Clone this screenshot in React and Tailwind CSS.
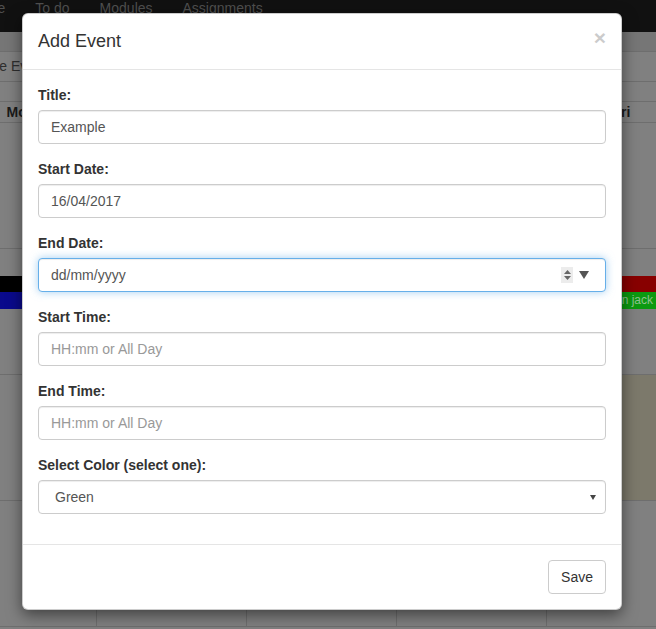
import { useState } from "react";

const inputCls =
  "block w-full h-[34px] px-[12px] py-[6px] text-[14px] leading-[20px] text-[#555] bg-white border border-[#ccc] rounded-[4px] shadow-[inset_0_1px_1px_rgba(0,0,0,0.075)] outline-none placeholder:text-[#999]";

function Field({ label, children }) {
  return (
    <div className="mb-[15px]">
      <label className="block mb-[5px] text-[14px] leading-[20px] font-bold text-[#333]">
        {label}
      </label>
      {children}
    </div>
  );
}

function Background() {
  const cols = ["Mon", "Tue", "Wed", "Thu", "Fri"];
  return (
    <div className="h-full">
      <div className="h-[32px] bg-[#111] flex text-[14px] leading-[16px] text-[#4f4f4f] overflow-hidden whitespace-nowrap">
        <span className="ml-[-32px]">Home</span>
        <span className="ml-[30px]">To do</span>
        <span className="ml-[30px]">Modules</span>
        <span className="ml-[30px]">Assignments</span>
      </div>
      <div className="h-[20px] bg-[#767676] border-b border-[#6e6e6e]" />
      <div className="h-[30px] flex items-center border-b border-[#6e6e6e] text-[14px] text-[#2e2e2e] whitespace-nowrap">
        <span className="ml-[-45px]">Remove Event</span>
      </div>
      <div className="h-[19px]" />
      <div className="ml-[-54px] w-[750px]">
        <div className="grid grid-cols-[repeat(5,150px)] h-[22px] border-y border-[#6e6e6e]">
          {cols.map((c, i) => (
            <div
              key={c}
              className={`text-center text-[14px] leading-[20px] font-bold text-[#1a1a1a] ${i > 0 ? "border-l border-[#6e6e6e]" : ""}`}
            >
              {c}
            </div>
          ))}
        </div>
        {[0, 1, 2, 3].map((r) => (
          <div key={r} className="grid grid-cols-[repeat(5,150px)] h-[126px] border-b border-[#6e6e6e]">
            {cols.map((c, i) => (
              <div
                key={c}
                className={`${i > 0 ? "border-l border-[#6e6e6e]" : ""} ${r === 2 && i === 4 ? "bg-[#7c796b]" : ""} pt-[27px]`}
              >
                {r === 1 && i === 0 && (
                  <div className="flex flex-col">
                    <div className="h-[16px] bg-black" />
                    <div className="h-[17px] bg-[#0a0a8c]" />
                  </div>
                )}
                {r === 1 && i === 4 && (
                  <div className="flex flex-col">
                    <div className="h-[16px] bg-[#880000]" />
                    <div className="h-[17px] bg-[#0c9a10] text-[12px] leading-[17px] text-[#8fc28f] pl-[46px] whitespace-nowrap">
                      Ronan jack
                    </div>
                  </div>
                )}
              </div>
            ))}
          </div>
        ))}
      </div>
    </div>
  );
}

export default function App() {
  const [title, setTitle] = useState("Example");
  const [start, setStart] = useState("16/04/2017");

  return (
    <div className="relative w-full h-[629px] overflow-hidden bg-[#808080] font-['Liberation_Sans',Arial,sans-serif]">
      <Background />

      <div className="absolute inset-0">
        <div className="ml-[22px] mt-[13px] w-[600px] bg-white border border-black/20 rounded-[6px] shadow-[0_5px_15px_rgba(0,0,0,0.5)]">
          <div className="flex items-start justify-between p-[15px] border-b border-[#e5e5e5]">
            <h4 className="text-[18px] leading-[25px] text-[#333]">Add Event</h4>
            <button className="-mt-[2px] text-[21px] leading-none font-bold text-black opacity-20">
              ×
            </button>
          </div>

          <div className="p-[15px]">
            <Field label="Title:">
              <input className={inputCls} value={title} onChange={(e) => setTitle(e.target.value)} />
            </Field>

            <Field label="Start Date:">
              <input className={inputCls} value={start} onChange={(e) => setStart(e.target.value)} />
            </Field>

            <Field label="End Date:">
              <div className="flex items-center h-[34px] px-[12px] text-[14px] text-[#555] bg-white border border-[#66afe9] rounded-[4px] shadow-[inset_0_1px_1px_rgba(0,0,0,0.075),0_0_8px_rgba(102,175,233,0.6)]">
                <span className="flex-1">dd/mm/yyyy</span>
                <span className="flex flex-col items-center justify-center gap-[2px] w-[12px] h-[16px] bg-[#ececec] mr-[6px]">
                  <svg width="7" height="4" viewBox="0 0 7 4">
                    <path d="M0 4 L3.5 0 L7 4 Z" fill="#666" />
                  </svg>
                  <svg width="7" height="4" viewBox="0 0 7 4">
                    <path d="M0 0 L3.5 4 L7 0 Z" fill="#666" />
                  </svg>
                </span>
                <svg width="10" height="8" viewBox="0 0 10 8" className="mr-[4px]">
                  <path d="M0 0 L10 0 L5 8 Z" fill="#555" />
                </svg>
              </div>
            </Field>

            <Field label="Start Time:">
              <input className={inputCls} placeholder="HH:mm or All Day" />
            </Field>

            <Field label="End Time:">
              <input className={inputCls} placeholder="HH:mm or All Day" />
            </Field>

            <Field label="Select Color (select one):">
              <div className="flex items-center h-[34px] pl-[16px] pr-[9px] text-[14px] text-[#555] bg-white border border-[#ccc] rounded-[4px] shadow-[inset_0_1px_1px_rgba(0,0,0,0.075)]">
                <span className="flex-1">Green</span>
                <svg width="6" height="6" viewBox="0 0 6 6">
                  <path d="M0 1 L6 1 L3 6 Z" fill="#444" />
                </svg>
              </div>
            </Field>
          </div>

          <div className="flex justify-end p-[15px] border-t border-[#e5e5e5]">
            <button className="px-[12px] py-[6px] text-[14px] leading-[20px] text-[#333] bg-white border border-[#ccc] rounded-[4px]">
              Save
            </button>
          </div>
        </div>
      </div>
    </div>
  );
}
